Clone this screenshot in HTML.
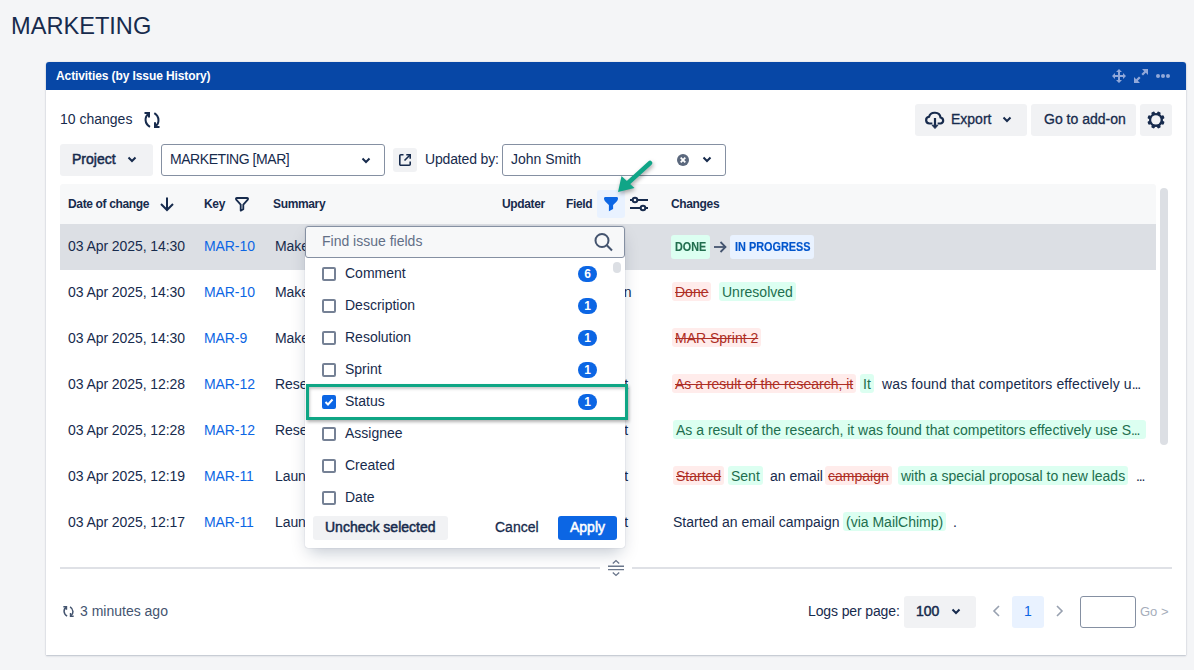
<!DOCTYPE html>
<html><head><meta charset="utf-8">
<style>
*{box-sizing:border-box;margin:0;padding:0}
html,body{width:1194px;height:670px;overflow:hidden;background:#f4f5f7;font-family:"Liberation Sans",sans-serif;color:#172b4d}
.a{position:absolute;white-space:nowrap}
svg{position:absolute;overflow:visible}
.title{left:11px;top:11px;font-size:23.6px;color:#172b4d;line-height:30px}
.panel{left:46px;top:62px;width:1140px;height:593px;background:#fff;border-radius:3px 3px 0 0;box-shadow:0 1px 2px rgba(9,30,66,.22),0 0 1px rgba(9,30,66,.25)}
.hdr{left:46px;top:62px;width:1140px;height:28px;background:#0747a6;border-radius:3px 3px 0 0}
.hdrt{left:56px;top:69px;font-size:12px;font-weight:bold;color:#fff;line-height:14px;letter-spacing:-0.1px}
.btn{background:#f1f2f4;border-radius:3px}
.t14{font-size:14px;line-height:16px}
.th{font-size:12px;font-weight:bold;line-height:14px;color:#172b4d;letter-spacing:-0.35px;top:197px}
.link{color:#0c66e4}
.el{letter-spacing:-1.1px}
.md{-webkit-text-stroke:0.5px #172b4d}
.sm{-webkit-text-stroke:0.3px #172b4d}
.row{font-size:14px;line-height:16px;letter-spacing:-0.08px}
.sel{border:1px solid #8590a2;border-radius:3px;background:#fff}
.loz{font-size:12px;font-weight:bold;line-height:14px;padding:0 4px;border-radius:3px;letter-spacing:-0.7px}
.add{background:#dcfff1;color:#216e4e;border-radius:3px}
.rem{background:#ffeceb;color:#ae2e24;border-radius:3px;text-decoration:line-through}
.chg{font-size:14px;line-height:21px;height:19px;padding:0 3px}
.cb{width:14px;height:14px;border:2px solid #758195;border-radius:2px;background:#fff}
.badge{width:19px;height:16px;margin-top:-1px;background:#0c66e4;color:#fff;border-radius:8px;font-size:12px;font-weight:bold;line-height:16px;text-align:center}
.item{font-size:14px;line-height:16px;left:345px}
</style></head><body>
<div class="a title">MARKETING</div>
<div class="a panel"></div>
<div class="a hdr"></div>
<div class="a hdrt">Activities (by Issue History)</div>
<!-- header icons -->
<svg style="left:1112px;top:69px" width="14" height="14" viewBox="0 0 14 14" fill="#91a8d9" opacity="1">
  <path d="M7 0 L10 3 H8 V6 H11 V4 L14 7 L11 10 V8 H8 V11 H10 L7 14 L4 11 H6 V8 H3 V10 L0 7 L3 4 V6 H6 V3 H4 Z"/>
</svg>
<svg style="left:1134px;top:69px" width="14" height="14" viewBox="0 0 14 14" fill="#91a8d9">
  <path d="M8 0 H14 V6 L11.8 3.8 L9 6.6 L7.4 5 L10.2 2.2 Z M6 14 H0 V8 L2.2 10.2 L5 7.4 L6.6 9 L3.8 11.8 Z"/>
</svg>
<svg style="left:1156px;top:74px" width="14" height="4" viewBox="0 0 14 4" fill="#91a8d9">
  <circle cx="2" cy="2" r="2"/><circle cx="7" cy="2" r="2"/><circle cx="12" cy="2" r="2"/>
</svg>

<div class="a t14" style="left:60px;top:111px">10 changes</div>
<svg style="left:144px;top:112px" width="16" height="16" viewBox="0 0 16 16" fill="none" stroke="#172b4d" stroke-width="2">
  <path d="M6 14.8 C0.3 11.5 0.3 4.5 4.8 1.8"/><path d="M0.5 1 H5 V5.5"/>
  <path d="M10.3 1.2 C15.7 4.5 15.7 11.5 11.2 14.2"/><path d="M15.5 15 H11 V10.3"/>
</svg>

<!-- export buttons -->
<div class="a btn" style="left:915px;top:104px;width:112px;height:32px"></div>
<svg style="left:924px;top:111px" width="22" height="18" viewBox="0 0 20 18" preserveAspectRatio="none" fill="none" stroke="#172b4d" stroke-width="2">
  <path d="M7.6 12.5 H5 A3.4 3.4 0 0 1 4.6 5.8 A5.3 5.3 0 0 1 15 6.5 A3.1 3.1 0 0 1 15.2 12.5 H12.4"/>
  <path d="M10 7 V14.5"/><path d="M7.3 14.2 H12.7 L10 17.6 Z" fill="#172b4d" stroke-width="0.8" stroke-linejoin="round"/>
</svg>
<div class="a t14 sm" style="left:951px;top:111px">Export</div>
<svg style="left:1002px;top:116px" width="10" height="7" viewBox="0 0 10 7" fill="none" stroke="#172b4d" stroke-width="2"><path d="M1.5 1.5 L5 5 L8.5 1.5"/></svg>
<div class="a btn" style="left:1031px;top:104px;width:105px;height:32px"></div>
<div class="a t14 sm" style="left:1044px;top:111px">Go to add-on</div>
<div class="a btn" style="left:1140px;top:104px;width:32px;height:32px"></div>
<svg style="left:1147px;top:111px" width="18" height="18" viewBox="0 0 18 18">
  <g fill="#172b4d"><circle cx="9" cy="9" r="7"/><rect x="7.2" y="0.3" width="3.6" height="5" rx="1.2" transform="rotate(22.5 9 9)"/><rect x="7.2" y="0.3" width="3.6" height="5" rx="1.2" transform="rotate(67.5 9 9)"/><rect x="7.2" y="0.3" width="3.6" height="5" rx="1.2" transform="rotate(112.5 9 9)"/><rect x="7.2" y="0.3" width="3.6" height="5" rx="1.2" transform="rotate(157.5 9 9)"/><rect x="7.2" y="0.3" width="3.6" height="5" rx="1.2" transform="rotate(202.5 9 9)"/><rect x="7.2" y="0.3" width="3.6" height="5" rx="1.2" transform="rotate(247.5 9 9)"/><rect x="7.2" y="0.3" width="3.6" height="5" rx="1.2" transform="rotate(292.5 9 9)"/><rect x="7.2" y="0.3" width="3.6" height="5" rx="1.2" transform="rotate(337.5 9 9)"/></g>
  <circle cx="8.9" cy="8.9" r="4.7" fill="#f1f2f4"/>
</svg>

<!-- filters -->
<div class="a btn" style="left:60px;top:144px;width:93px;height:32px"></div>
<div class="a t14 md" style="left:72px;top:151px">Project</div>
<svg style="left:127px;top:156px" width="10" height="7" viewBox="0 0 10 7" fill="none" stroke="#172b4d" stroke-width="2"><path d="M1.5 1.5 L5 5 L8.5 1.5"/></svg>
<div class="a sel" style="left:161px;top:144px;width:224px;height:32px"></div>
<div class="a t14" style="left:170px;top:151px;letter-spacing:-0.45px">MARKETING [MAR]</div>
<svg style="left:361px;top:157px" width="10" height="7" viewBox="0 0 10 7" fill="none" stroke="#172b4d" stroke-width="2"><path d="M1.5 1.5 L5 5 L8.5 1.5"/></svg>
<div class="a btn" style="left:393px;top:148px;width:24px;height:24px"></div>
<svg style="left:399px;top:154px" width="12" height="12" viewBox="0 0 12 12" fill="none" stroke="#172b4d" stroke-width="1.6">
  <path d="M4.5 0.8 H1.8 A1 1 0 0 0 0.8 1.8 V10.2 A1 1 0 0 0 1.8 11.2 H10.2 A1 1 0 0 0 11.2 10.2 V7.5"/>
  <path d="M5.5 6.5 L11 1"/><path d="M7.3 0.8 H11.2 V4.7"/>
</svg>
<div class="a t14" style="left:425px;top:151px;letter-spacing:-0.15px">Updated by:</div>
<div class="a sel" style="left:502px;top:144px;width:224px;height:32px"></div>
<div class="a t14" style="left:511px;top:151px">John Smith</div>
<svg style="left:677px;top:154px" width="12" height="12" viewBox="0 0 12 12">
  <circle cx="6" cy="6" r="6" fill="#5b687d"/><path d="M3.7 3.7 L8.3 8.3 M8.3 3.7 L3.7 8.3" stroke="#fff" stroke-width="1.8"/>
</svg>
<svg style="left:702px;top:156px" width="10" height="7" viewBox="0 0 10 7" fill="none" stroke="#172b4d" stroke-width="2"><path d="M1.5 1.5 L5 5 L8.5 1.5"/></svg>

<!-- table header -->
<div class="a" style="left:60px;top:184px;width:1096px;height:40px;background:#f7f8f9;border-radius:3px 3px 0 0"></div>
<div class="a th" style="left:68px">Date of change</div>
<svg style="left:160px;top:197px" width="14" height="14" viewBox="0 0 14 14" fill="none" stroke="#172b4d" stroke-width="2"><path d="M7 0.5 V13"/><path d="M1 7 L7 13 L13 7"/></svg>
<div class="a th" style="left:204px">Key</div>
<svg style="left:235px;top:197px" width="14" height="14" viewBox="0 0 14 14" fill="none" stroke="#172b4d" stroke-width="1.8" stroke-linejoin="round"><path d="M2 1 H12 Q13.6 1 12.8 2.6 L8.3 7.6 V12.2 L5.7 13.6 V7.6 L1.2 2.6 Q0.4 1 2 1 Z"/></svg>
<div class="a th" style="left:273px">Summary</div>
<div class="a th" style="left:502px">Updater</div>
<div class="a th" style="left:566px">Field</div>
<div class="a" style="left:597px;top:190px;width:28px;height:28px;background:#e9f2ff;border-radius:3px"></div>
<svg style="left:604px;top:197px" width="14" height="14" viewBox="0 0 14 14" fill="#0c66e4"><path d="M1.2 0 H12.8 Q14.3 0 14 2 Q13.6 3.8 12 5.3 L9.1 8 V12 L4.9 14.3 V8 L2 5.3 Q0.4 3.8 0 2 Q-0.3 0 1.2 0 Z"/></svg>
<svg style="left:630px;top:197px" width="18" height="14" viewBox="0 0 18 14" fill="none" stroke="#172b4d" stroke-width="2">
  <path d="M0 3 H2.5 M7.5 3 H18"/><circle cx="5" cy="3" r="2.3"/>
  <path d="M0 11 H10.5 M15.5 11 H18"/><circle cx="13" cy="11" r="2.3"/>
</svg>
<div class="a th" style="left:671px">Changes</div>

<!-- scrollbar -->
<div class="a" style="left:1160px;top:188px;width:8px;height:257px;background:#dcdfe4;border-radius:4px"></div>

<!-- rows -->
<div class="a" style="left:60px;top:224px;width:1096px;height:46px;background:#dcdfe4"></div>

<div class="a row" style="left:68px;top:238px">03 Apr 2025, 14:30</div>
<div class="a row link" style="left:204px;top:238px">MAR-10</div>
<div class="a row" style="left:275px;top:238px">Make a presentation</div>
<div class="a row" style="left:502px;top:238px">John Smith</div>
<div class="a row" style="left:566px;top:238px">Status</div>

<div class="a row" style="left:68px;top:284px">03 Apr 2025, 14:30</div>
<div class="a row link" style="left:204px;top:284px">MAR-10</div>
<div class="a row" style="left:275px;top:284px">Make a presentation</div>
<div class="a row" style="left:502px;top:284px">John Smith</div>
<div class="a row" style="left:566px;top:284px">Resolution</div>

<div class="a row" style="left:68px;top:330px">03 Apr 2025, 14:30</div>
<div class="a row link" style="left:204px;top:330px">MAR-9</div>
<div class="a row" style="left:275px;top:330px">Make a presentation</div>
<div class="a row" style="left:502px;top:330px">John Smith</div>
<div class="a row" style="left:566px;top:330px">Sprint</div>

<div class="a row" style="left:68px;top:376px">03 Apr 2025, 12:28</div>
<div class="a row link" style="left:204px;top:376px">MAR-12</div>
<div class="a row" style="left:275px;top:376px">Research competitors</div>
<div class="a row" style="left:502px;top:376px">John Smith</div>
<div class="a row" style="left:568px;top:376px">Comment</div>

<div class="a row" style="left:68px;top:422px">03 Apr 2025, 12:28</div>
<div class="a row link" style="left:204px;top:422px">MAR-12</div>
<div class="a row" style="left:275px;top:422px">Research competitors</div>
<div class="a row" style="left:502px;top:422px">John Smith</div>
<div class="a row" style="left:568px;top:422px">Comment</div>

<div class="a row" style="left:68px;top:468px">03 Apr 2025, 12:19</div>
<div class="a row link" style="left:204px;top:468px">MAR-11</div>
<div class="a row" style="left:275px;top:468px">Launch campaign</div>
<div class="a row" style="left:502px;top:468px">John Smith</div>
<div class="a row" style="left:568px;top:468px">Comment</div>

<div class="a row" style="left:68px;top:514px">03 Apr 2025, 12:17</div>
<div class="a row link" style="left:204px;top:514px">MAR-11</div>
<div class="a row" style="left:275px;top:514px">Launch campaign</div>
<div class="a row" style="left:502px;top:514px">John Smith</div>
<div class="a row" style="left:568px;top:514px">Comment</div>

<!-- changes column -->
<div class="a loz add" style="left:671px;top:235px;height:24px;width:39px;padding:0"></div><div class="a loz" style="left:675px;top:240px;color:#216e4e;letter-spacing:0;padding:0;transform:scaleX(0.9);transform-origin:0 0;-webkit-text-stroke:0.15px #216e4e">DONE</div>
<svg style="left:713px;top:240px" width="14" height="14" viewBox="0 0 14 14" fill="none" stroke="#44546f" stroke-width="1.8"><path d="M1 7 H12.5"/><path d="M7.5 2 L12.5 7 L7.5 12"/></svg>
<div class="a loz" style="left:730px;top:235px;height:24px;width:84px;padding:0;background:#e9f2ff"></div><div class="a loz" style="left:735px;top:240px;color:#0055cc;letter-spacing:0;padding:0;transform:scaleX(0.907);transform-origin:0 0;-webkit-text-stroke:0.15px #0055cc">IN PROGRESS</div>

<div class="a chg rem" style="left:672px;top:282px">Done</div>
<div class="a chg add" style="left:719px;top:282px">Unresolved</div>

<div class="a chg rem" style="left:672px;top:328px">MAR Sprint 2</div>

<div class="a chg rem" style="left:672px;top:374px">As a result of the research, it</div>
<div class="a chg add" style="left:860px;top:374px">It</div>
<div class="a chg" style="left:879px;top:374px;letter-spacing:0.12px">was found that competitors effectively u<span class="el">...</span></div>

<div class="a chg add" style="left:673px;top:420px;width:473px;overflow:hidden">As a result of the research, it was found that competitors effectively use S<span class="el">...</span></div>

<div class="a chg rem" style="left:673px;top:466px">Started</div>
<div class="a chg add" style="left:728px;top:466px">Sent</div>
<div class="a chg" style="left:767px;top:466px">an email</div>
<div class="a chg rem" style="left:825px;top:466px">campaign</div>
<div class="a chg add" style="left:898px;top:466px">with a special proposal to new leads</div>
<div class="a chg" style="left:1133px;top:466px"><span class="el">...</span></div>

<div class="a chg" style="left:670px;top:512px">Started an email campaign</div>
<div class="a chg add" style="left:843px;top:512px">(via MailChimp)</div>
<div class="a chg" style="left:950px;top:512px">.</div>

<!-- divider -->
<div class="a" style="left:60px;top:567px;width:540px;height:2px;background:#dfe1e6"></div>
<div class="a" style="left:632px;top:567px;width:540px;height:2px;background:#dfe1e6"></div>
<svg style="left:608px;top:559px" width="16" height="18" viewBox="0 0 16 18" fill="none" stroke="#6b778c" stroke-width="1.4">
  <path d="M4.8 4.5 L8 1.6 L11.2 4.5"/><path d="M0 7.3 H16 M0 10.6 H16"/><path d="M4.8 13.5 L8 16.4 L11.2 13.5"/>
</svg>

<!-- footer -->
<svg style="left:63px;top:606px" width="11" height="11" viewBox="0 0 16 16" fill="none" stroke="#44546f" stroke-width="2.2">
  <path d="M6 14.8 C0.3 11.5 0.3 4.5 4.8 1.8"/><path d="M0.5 1 H5 V5.5"/>
  <path d="M10.3 1.2 C15.7 4.5 15.7 11.5 11.2 14.2"/><path d="M15.5 15 H11 V10.3"/>
</svg>
<div class="a t14" style="left:80px;top:603px;color:#44546f">3 minutes ago</div>

<div class="a t14" style="left:808px;top:603px;letter-spacing:-0.12px">Logs per page:</div>
<div class="a btn" style="left:904px;top:596px;width:72px;height:32px"></div>
<div class="a t14 md" style="left:916px;top:603px">100</div>
<svg style="left:951px;top:608px" width="10" height="7" viewBox="0 0 10 7" fill="none" stroke="#172b4d" stroke-width="2"><path d="M1.5 1.5 L5 5 L8.5 1.5"/></svg>
<svg style="left:992px;top:605px" width="8" height="12" viewBox="0 0 8 12" fill="none" stroke="#98a1b0" stroke-width="1.6"><path d="M7 1 L2 6 L7 11"/></svg>
<div class="a" style="left:1012px;top:596px;width:32px;height:32px;background:#e9f2ff;border-radius:3px"></div>
<div class="a t14 link" style="left:1024px;top:603px">1</div>
<svg style="left:1056px;top:605px" width="8" height="12" viewBox="0 0 8 12" fill="none" stroke="#98a1b0" stroke-width="1.6"><path d="M1 1 L6 6 L1 11"/></svg>
<div class="a sel" style="left:1080px;top:596px;width:56px;height:32px"></div>
<div class="a" style="left:1140px;top:604px;font-size:13px;line-height:15px;color:#a5adba">Go &gt;</div>

<!-- popup -->
<div class="a" style="left:305px;top:226px;width:320px;height:322px;background:#fff;border-radius:3px;box-shadow:0 8px 16px -4px rgba(9,30,66,.25),0 0 1px rgba(9,30,66,.31)"></div>
<div class="a" style="left:305px;top:226px;width:320px;height:32px;border:1px solid #8590a2;border-radius:3px;background:#f7f8f9"></div>
<div class="a t14" style="left:322px;top:233px;color:#626f86">Find issue fields</div>
<svg style="left:594px;top:233px" width="20" height="18" viewBox="0 0 20 18" fill="none" stroke="#44546f" stroke-width="2"><circle cx="8" cy="7.5" r="6.5"/><path d="M12.8 12.3 L18 17.5"/></svg>
<div class="a" style="left:613px;top:262px;width:8px;height:11px;background:#dcdfe4;border-radius:4px"></div>

<div class="a cb" style="left:322px;top:267px"></div><div class="a item" style="top:265px">Comment</div><div class="a badge" style="left:578px;top:267px">6</div>
<div class="a cb" style="left:322px;top:299px"></div><div class="a item" style="top:297px">Description</div><div class="a badge" style="left:578px;top:299px">1</div>
<div class="a cb" style="left:322px;top:331px"></div><div class="a item" style="top:329px">Resolution</div><div class="a badge" style="left:578px;top:331px">1</div>
<div class="a cb" style="left:322px;top:363px"></div><div class="a item" style="top:361px">Sprint</div><div class="a badge" style="left:578px;top:363px">1</div>
<div class="a cb" style="left:322px;top:395px;background:#0c66e4;border-color:#0c66e4"></div>
<svg style="left:322px;top:395px" width="14" height="14" viewBox="0 0 14 14" fill="none" stroke="#fff" stroke-width="2"><path d="M3.5 7 L6 9.5 L10.5 4.5"/></svg>
<div class="a item" style="top:393px">Status</div><div class="a badge" style="left:578px;top:395px">1</div>
<div class="a cb" style="left:322px;top:427px"></div><div class="a item" style="top:425px">Assignee</div>
<div class="a cb" style="left:322px;top:459px"></div><div class="a item" style="top:457px">Created</div>
<div class="a cb" style="left:322px;top:491px"></div><div class="a item" style="top:489px">Date</div>

<div class="a btn" style="left:313px;top:516px;width:135px;height:24px"></div>
<div class="a t14 md" style="left:325px;top:519px">Uncheck selected</div>
<div class="a t14 sm" style="left:495px;top:519px">Cancel</div>
<div class="a" style="left:558px;top:516px;width:59px;height:24px;background:#0c66e4;border-radius:3px"></div>
<div class="a t14 md" style="left:570px;top:519px;color:#fff;-webkit-text-stroke-color:#fff">Apply</div>

<!-- green highlight -->
<div class="a" style="left:306px;top:384px;width:322px;height:36px;border:3px solid #0fa685;box-shadow:1px 2px 3px rgba(0,0,0,.3),inset 1px 2px 3px rgba(0,0,0,.22)"></div>

<!-- green arrow -->
<svg style="left:600px;top:150px;filter:drop-shadow(1px 2px 2px rgba(0,0,0,.35))" width="60" height="50" viewBox="600 150 60 50">
  <path d="M650 163 L628 183" stroke="#10a587" stroke-width="4.5" stroke-linecap="round"/>
  <path d="M618 192 L621.5 176 L634.5 188 Z" fill="#10a587"/>
</svg>
</body></html>
